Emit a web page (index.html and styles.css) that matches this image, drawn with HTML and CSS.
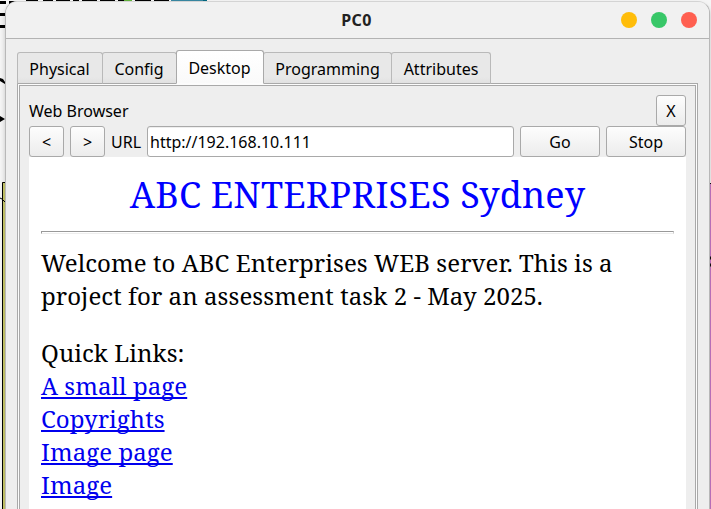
FILE: index.html
```
<!DOCTYPE html>
<html lang="en">
<head>
<meta charset="utf-8">
<title>PC0</title>
<link rel="stylesheet" href="styles.css">
</head>
<body>
<svg class="canvas" width="711" height="509" viewBox="0 0 711 509" aria-hidden="true">
  <path d="M0 2.5H6M9 2.5H21" stroke="#000" stroke-width="3"/>
  <path d="M26 1H38M43 1H53M56 1H70M73 1H79M82 1H97M100 1H115M118 1H124M135 1H151M154 1H169" stroke="#000" stroke-width="2"/>
  <path d="M0 14.5H5M0 26.5H5" stroke="#000" stroke-width="3"/>
  <path d="M124 0h8v2h-8z" fill="#62b33c"/>
  <path d="M171 0h35v2h-35z" fill="#3888a2"/>
  <path d="M203 0h4v2h-4z" fill="#00677f"/>
  <path d="M0 78L3 79L5 82V84L0 81ZM0 116L5 119L0 122Z"/>
  <path d="M2 182h4v327h-4z" fill="#cbcb6b"/>
  <path d="M2.5 509V182.5H6M0 198l2 1M3 200l3 3" stroke="#000" fill="none"/>
  <path d="M709 183h2v326h-2z" fill="#c878c8"/>
  <path d="M709 183.5h2" stroke="#111"/>
  <path d="M709 258h2M709 265h2" stroke="#111" stroke-width="3"/>
</svg>
<main class="window">
  <header class="titlebar">
    <h1 class="title">PC0</h1>
    <div class="controls"><i class="dot minimize"></i><i class="dot maximize"></i><i class="dot close"></i></div>
  </header>
  <nav class="tabs">
    <span class="tab physical">Physical</span><span class="tab config">Config</span><span class="tab active">Desktop</span><span class="tab programming">Programming</span><span class="tab attributes">Attributes</span>
  </nav>
  <section class="frame">
    <div class="panel">
      <div class="heading"><span>Web Browser</span><button class="btn x">X</button></div>
      <div class="toolbar">
        <button class="btn nav">&lt;</button>
        <button class="btn nav">&gt;</button>
        <label class="label" for="url">URL</label>
        <input class="url" id="url" value="http://192.168.10.111">
        <button class="btn wide">Go</button>
        <button class="btn wide">Stop</button>
      </div>
      <article class="page">
        <h2 class="headline">ABC ENTERPRISES Sydney</h2>
        <hr class="rule">
        <p class="text">Welcome to ABC Enterprises WEB server. This is a<br>project for an assessment task 2 - May 2025.</p>
        <p class="text">Quick Links:<br><a href="#">A small page</a><br><a href="#">Copyrights</a><br><a href="#">Image page</a><br><a href="#">Image</a></p>
      </article>
    </div>
  </section>
</main>
</body>
</html>
```
FILE: styles.css
```
* { box-sizing: border-box; }
html, body { margin: 0; height: 509px; overflow: hidden; }
body { background: #f5f5f5; font: 16px/22px "Noto Sans", "Open Sans", sans-serif; color: #000; }
.canvas { position: absolute; left: 0; top: 0; }
.window {
  position: relative;
  width: 705px;
  height: 520px;
  margin: 1px 0 0 5px;
  background: #eee;
  border: 1px solid #b8b8b8;
  border-top-color: #d4d4d4;
  border-radius: 12px 12px 0 0;
  box-shadow: 0 3px 5px rgba(0, 0, 0, .2);
  overflow: hidden;
}
.titlebar {
  height: 37px;
  display: grid;
  grid-template-columns: 1fr auto 1fr;
  align-items: center;
  background: #f1f1f1;
  border-bottom: 1px solid #b3b3b3;
}
.title { grid-column: 2; margin: 0; padding-right: 2px; font-size: 16px; font-weight: 700; line-height: 36px; color: #222; letter-spacing: .4px; }
.controls { display: flex; justify-content: flex-end; gap: 14px; padding-right: 12px; }
.dot { width: 16px; height: 16px; border-radius: 50%; }
.minimize { background: #ffbd0a; }
.maximize { background: #38c768; }
.close { background: #ff5f50; }
.tabs { display: flex; align-items: flex-end; height: 45px; padding-left: 11px; position: relative; z-index: 1; }
.tab {
  height: 32px;
  margin-right: -1px;
  border: 1px solid #b9b9b9;
  border-bottom-color: #a9a9a9;
  border-radius: 3px 3px 0 0;
  background: linear-gradient(#e8e8e8 80%, #e1e1e1);
  text-align: center;
  line-height: 33px;
}
.physical { width: 86px; padding-right: 1px; }
.config { width: 75px; padding-right: 1px; }
.active { width: 88px; height: 34px; padding-right: 1px; background: linear-gradient(#fff, #fafafa); border-color: #a9a9a9; border-bottom-color: #fcfcfc; line-height: 34px; z-index: 1; }
.programming { width: 129px; }
.attributes { width: 100px; }
.frame { margin: -1px 11px 0; border: 1px solid #a9a9a9; background: #fcfcfc; padding: 1px 1px 0; width: 681px; }
.panel { border: 1px solid #a9a9a9; background: #eee; padding: 9px 9px 0; height: 440px; }
.heading { display: flex; justify-content: space-between; height: 31px; line-height: 32px; }
.btn, .url { height: 31px; padding: 0; margin: 0; border: 1px solid #a9a9a9; border-radius: 3px; font: inherit; color: inherit; }
.btn { background: linear-gradient(#fdfdfd, #ececec); line-height: 30px; text-align: center; }
.x { width: 30px; }
.toolbar { display: flex; gap: 6px; height: 31px; line-height: 32px; }
.nav { width: 35px; flex: none; }
.label { width: 30px; }
.url { flex: 1; min-width: 0; background: #fff; padding: 1px 0 0 2px; box-shadow: inset 0 1px #eee; }
.wide { width: 80px; }
.page { height: 380px; background: #fff; padding: 12px; font: 24px/33px "Noto Serif", "Droid Serif", "DejaVu Serif", serif; }
.headline { margin: 0; font-size: 36px; line-height: 52px; font-weight: 400; color: #00f; text-align: center; white-space: nowrap; letter-spacing: .16px; }
.rule { margin: 10px 0 12px; height: 3px; border: 1px solid #999; border-right-color: #ccc; border-bottom-color: #eee; }
.text { margin: 0 0 24px; white-space: nowrap; letter-spacing: .075px; }
.text a { color: #00e; text-decoration-thickness: 2px; text-underline-offset: 2px; text-decoration-skip-ink: none; }
```
